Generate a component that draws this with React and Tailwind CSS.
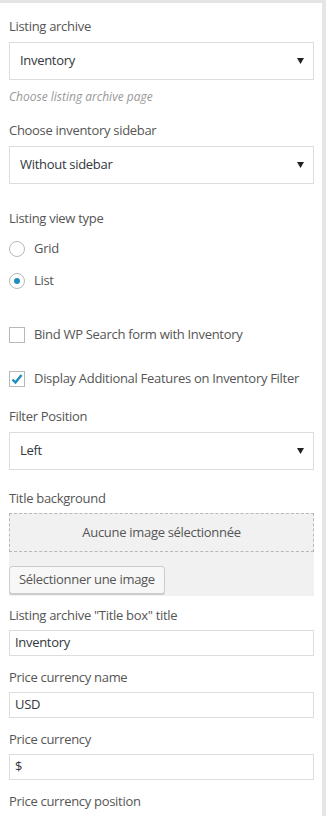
import React from 'react';

const font = { fontFamily: '"Open Sans", "Noto Sans", sans-serif' };

const Label = ({ children, className = '' }) => (
  <div className={`h-5 leading-5 text-[13px] tracking-[-0.3px] text-[#555] ${className}`}>{children}</div>
);

const Select = ({ value, className = '' }) => (
  <div className={`flex h-[38px] items-center justify-between border border-[#ddd] bg-white pl-[10px] pr-[9px] text-[13px] tracking-[-0.3px] text-[#32373c] ${className}`}>
    <span>{value}</span>
    <svg width="7" height="6" viewBox="0 0 7 6"><path d="M0 0h7L3.5 6z" fill="#222" /></svg>
  </div>
);

const TextInput = ({ value, className = '' }) => (
  <div className={`flex h-[26px] items-center border border-[#ddd] bg-white px-[5px] text-[13px] tracking-[-0.3px] text-[#32373c] ${className}`}>
    {value}
  </div>
);

const Radio = ({ label, checked, className = '' }) => (
  <div className={`flex h-5 items-center gap-[9px] text-[13px] tracking-[-0.3px] text-[#555] ${className}`}>
    <span className="flex h-4 w-4 items-center justify-center rounded-full border border-[#b4b9be] bg-white">
      {checked && <span className="h-[6px] w-[6px] rounded-full bg-[#1e8cbe]" />}
    </span>
    <span>{label}</span>
  </div>
);

const Checkbox = ({ label, checked, className = '' }) => (
  <div className={`flex h-5 items-center gap-[9px] text-[13px] tracking-[-0.3px] text-[#555] ${className}`}>
    <span className="flex h-4 w-4 items-center justify-center border border-[#b4b9be] bg-white">
      {checked && (
        <svg width="14" height="14" viewBox="0 0 14 14">
          <path d="M2.5 7.5l3 3 6-7.5" stroke="#1e8cbe" strokeWidth="2.4" fill="none" />
        </svg>
      )}
    </span>
    <span>{label}</span>
  </div>
);

export default function App() {
  return (
    <div className="flex h-[816px] w-[326px] flex-col bg-white" style={font}>
      <div className="h-[3px] bg-[#e5e5e5]" />
      <div className="flex flex-1">
        <div className="flex-1 pl-[9px] pr-[8px] pt-[13px]">
          <Label>Listing archive</Label>
          <Select value="Inventory" className="mt-[6px]" />
          <div className="mt-[7px] h-5 leading-5 text-[12px] italic text-[#999]">Choose listing archive page</div>

          <Label className="mt-[13px]">Choose inventory sidebar</Label>
          <Select value="Without sidebar" className="mt-[6px]" />

          <Label className="mt-[24px]">Listing view type</Label>
          <Radio label="Grid" className="mt-[11px]" />
          <Radio label="List" checked className="mt-[12px]" />

          <Checkbox label="Bind WP Search form with Inventory" className="mt-[34px]" />
          <Checkbox label="Display Additional Features on Inventory Filter" checked className="mt-[24px]" />

          <Label className="mt-[17px]">Filter Position</Label>
          <Select value="Left" className="mt-[6px]" />

          <Label className="mt-[18px]">Title background</Label>
          <div className="mt-[5px] bg-[#f1f1f1] pb-[2px]">
            <div className="flex h-[39px] items-center justify-center border border-dashed border-[#b4b9be] text-[13px] tracking-[-0.3px] text-[#555]">
              Aucune image sélectionnée
            </div>
            <button className="mt-[14px] h-[28px] rounded-[3px] border border-[#ccc] bg-[#f7f7f7] px-[9px] text-[13px] tracking-[-0.3px] text-[#555] shadow-[0_1px_0_#ccc]">
              Sélectionner une image
            </button>
          </div>

          <Label className="mt-[9px]">Listing archive "Title box" title</Label>
          <TextInput value="Inventory" className="mt-[5px]" />
          <Label className="mt-[11px]">Price currency name</Label>
          <TextInput value="USD" className="mt-[5px]" />
          <Label className="mt-[11px]">Price currency</Label>
          <TextInput value="$" className="mt-[5px]" />
          <Label className="mt-[11px]">Price currency position</Label>
        </div>
        <div className="w-[4px] bg-[#e5e5e5]" />
      </div>
    </div>
  );
}
